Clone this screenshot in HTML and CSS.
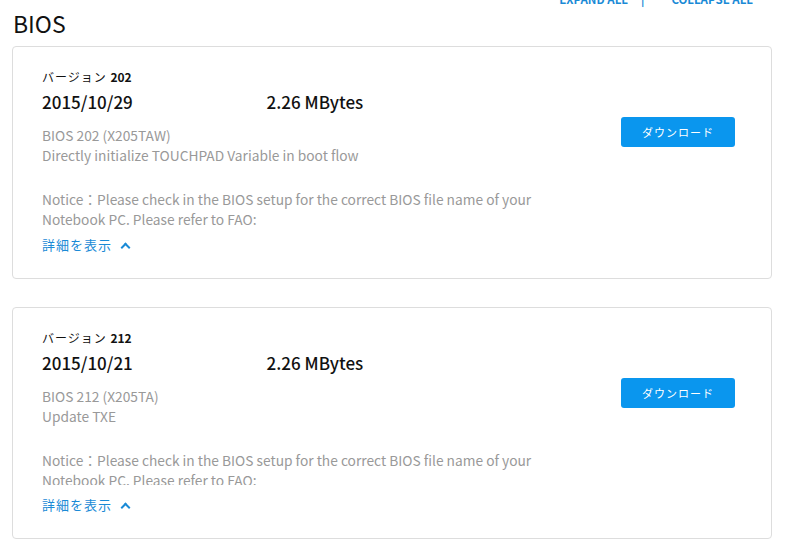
FILE: index.html
```html
<!DOCTYPE html>
<html lang="ja">

<head>
  <meta charset="utf8">
  <meta name="viewport" content="width=device-width, initial-scale=1.0">
  <title>BIOS</title>
  <link rel="stylesheet" href="styles.css">
</head>

<body>
  <div class="page">
    <div class="toolbar">
      <a class="tool">Expand all</a>
      <span class="sep">|</span>
      <a class="tool tool-last">Collapse all</a>
    </div>

    <h1>BIOS</h1>

    <div class="card">
      <div class="info">
        <div class="version">バージョン <b>202</b></div>
        <div class="meta">
          <span class="date">2015/10/29</span>
          <span class="size">2.26 MBytes</span>
        </div>
        <div class="desc">
          <p>BIOS 202 (X205TAW)<br>Directly initialize TOUCHPAD Variable in boot flow</p>
          <p class="notice">Notice：Please check in the BIOS setup for the correct BIOS file name of your Notebook PC. Please refer to FAQ:</p>
        </div>
        <a class="more">詳細を表示 <span class="chev"></span></a>
      </div>
      <div class="action">
        <button class="download">ダウンロード</button>
      </div>
    </div>

    <div class="card">
      <div class="info">
        <div class="version">バージョン <b>212</b></div>
        <div class="meta">
          <span class="date">2015/10/21</span>
          <span class="size">2.26 MBytes</span>
        </div>
        <div class="desc desc-tight">
          <p>BIOS 212 (X205TA)<br>Update TXE</p>
          <p class="notice">Notice：Please check in the BIOS setup for the correct BIOS file name of your Notebook PC. Please refer to FAQ:</p>
        </div>
        <a class="more">詳細を表示 <span class="chev"></span></a>
      </div>
      <div class="action">
        <button class="download">ダウンロード</button>
      </div>
    </div>
  </div>
</body>

</html>
```

FILE: styles.css
```css
html,
body {
  margin: 0;
  background: #fff;
}

body {
  font-family: 'Noto Sans CJK JP', 'Noto Sans', sans-serif;
  color: #111;
}

.page {
  width: 760px;
  padding: 0 12px;
}

.toolbar {
  display: flex;
  justify-content: flex-end;
  margin-top: -9px;
  padding-right: 19px;
  font-size: 11.5px;
  line-height: 17px;
  font-weight: 700;
  text-transform: uppercase;
  color: #1a8ad6;
}

.sep {
  margin: 0 12px 0 13px;
}

.tool-last {
  margin-left: 15px;
}

h1 {
  margin: 0 0 8px 1px;
  font-size: 23px;
  line-height: 30px;
  font-weight: 400;
}

.card {
  display: flex;
  justify-content: space-between;
  border: 1px solid #ddd;
  border-radius: 4px;
  padding: 22px 36px 25px 29px;
  margin-bottom: 28px;
}

.version {
  font-size: 12px;
  line-height: 16px;
  letter-spacing: 1px;
  margin-bottom: 4px;
}

.version b {
  font-weight: 700;
  letter-spacing: 0;
}

.meta {
  font-size: 17px;
  line-height: 26px;
  font-weight: 500;
}

.size {
  margin-left: 130px;
}

.desc {
  margin-top: 10px;
  max-height: 100px;
  overflow: hidden;
  font-size: 13.75px;
  line-height: 20px;
  color: #999;
}

/* second card clips the last line a little higher */
.desc-tight {
  max-height: 99px;
}

.desc p {
  margin: 0;
}

.desc .notice {
  width: 510px;
  margin-top: 24px;
}

.more {
  display: block;
  margin-top: 12px;
  font-size: 13px;
  line-height: 16px;
  letter-spacing: 1px;
  color: #1a8ad6;
}

.chev {
  display: inline-block;
  width: 5px;
  height: 5px;
  margin-left: 6px;
  border-top: 2px solid #1a8ad6;
  border-left: 2px solid #1a8ad6;
  transform: translateY(1px) rotate(45deg);
}

.download {
  margin-top: 48px;
  width: 114px;
  height: 30px;
  border: 0;
  border-radius: 3px;
  background-color: #0a96ee;
  color: #fff;
  font-family: inherit;
  font-size: 11px;
  letter-spacing: 1px;
}
```
